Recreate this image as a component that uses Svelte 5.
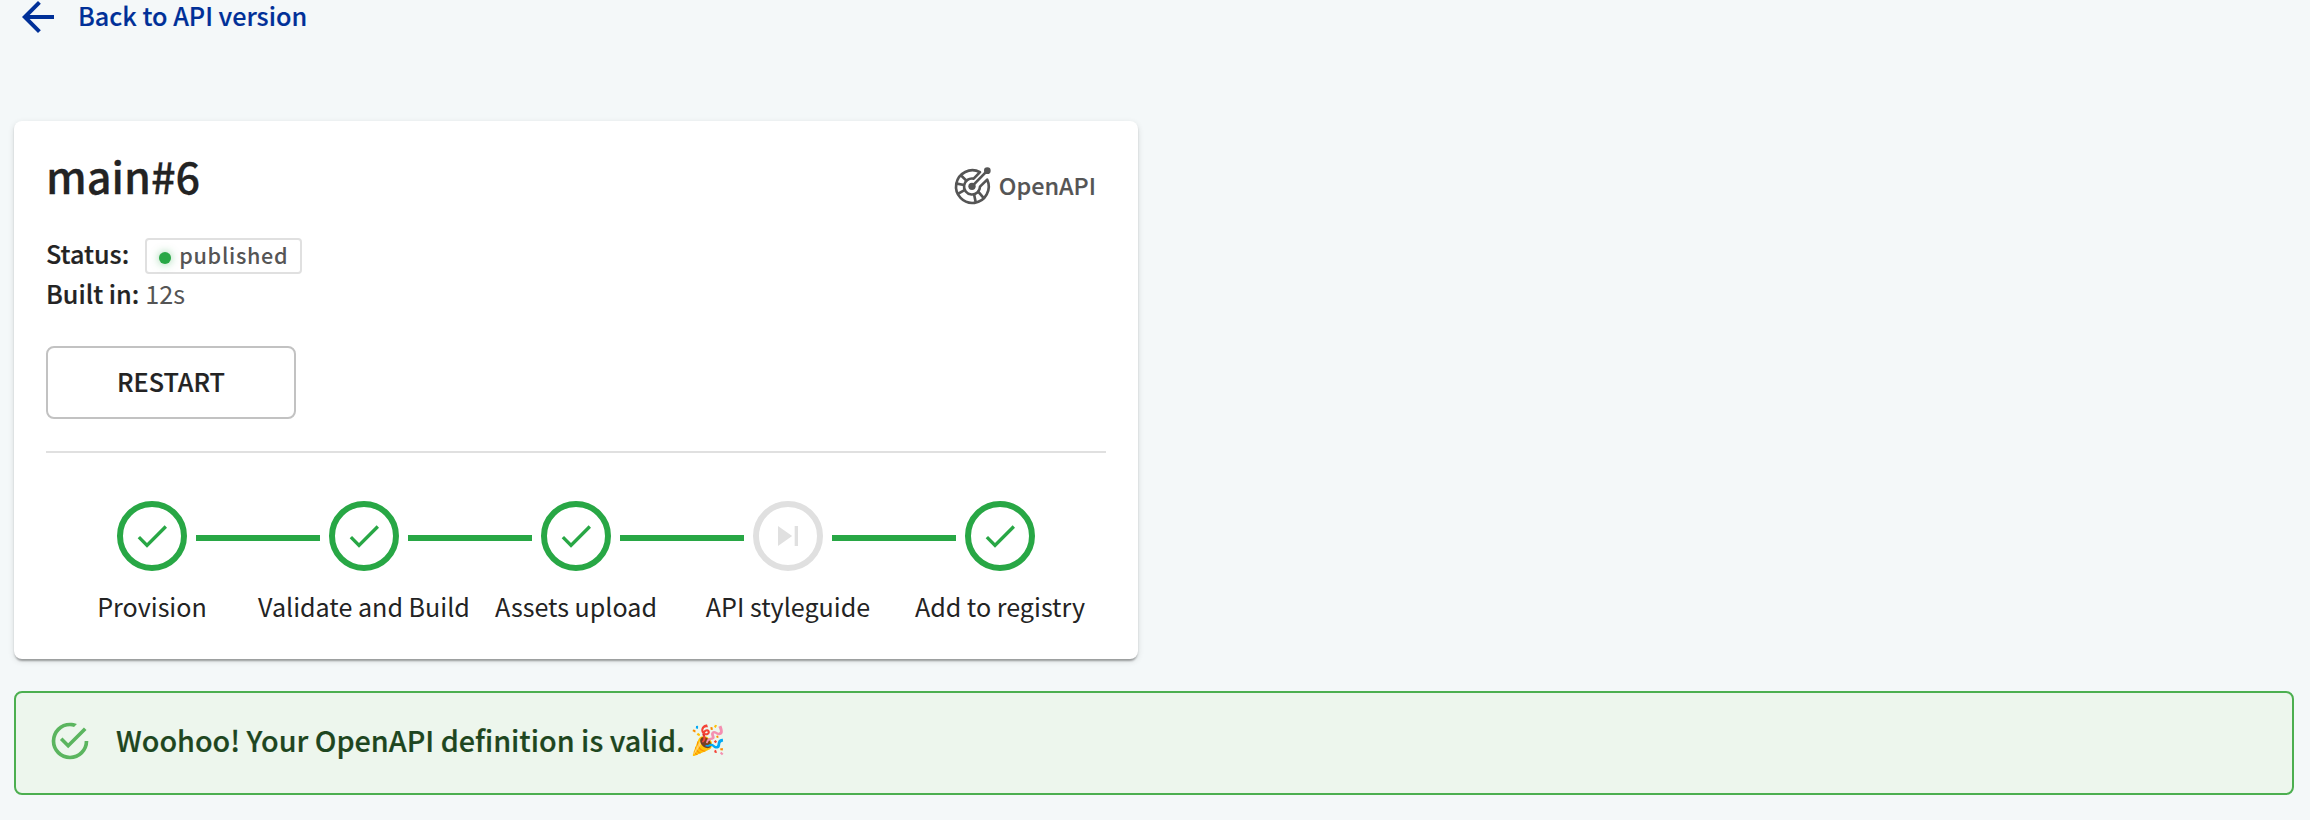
<script>
  const steps = [
    { label: 'Provision', state: 'done' },
    { label: 'Validate and Build', state: 'done' },
    { label: 'Assets upload', state: 'done' },
    { label: 'API styleguide', state: 'skipped' },
    { label: 'Add to registry', state: 'done' },
  ];
</script>

<main class="page">
  <a class="back" href="#versions">
    <svg class="back-icon" viewBox="0 0 24 24">
      <path d="M20 11H7.83l5.59-5.59L12 4l-8 8 8 8 1.41-1.41L7.83 13H20v-2z" />
    </svg>
    <span>Back to API version</span>
  </a>

  <section class="card">
    <header class="card-head">
      <h1>main#6</h1>
      <div class="format">
        <svg class="format-icon" viewBox="0 0 120 120">
          <g fill="none" stroke="currentColor" stroke-width="8" stroke-linejoin="round">
            <path d="M81 18.5A49 49 0 1 0 102.5 41L81 62A24 24 0 1 1 62 38Z" />
            <path d="M23 27L40 44M8 52L33 57M16 83L37 71M68 108L63 84M91 95L75 76" />
            <path d="M57 61L103 14" />
          </g>
          <circle cx="57" cy="61" r="11" fill="currentColor" />
          <circle cx="103" cy="14" r="10" fill="currentColor" />
        </svg>
        <span>OpenAPI</span>
      </div>
    </header>

    <div class="facts">
      <div class="fact">
        <b>Status:</b>
        <span class="badge"><i class="dot"></i><span>published</span></span>
      </div>
      <div class="fact"><b>Built in:</b><span class="value">12s</span></div>
    </div>

    <button class="restart">RESTART</button>

    <ol class="steps">
      {#each steps as step}
        <li class="step">
          <span class="line"></span>
          <span class="ring" class:skipped={step.state === 'skipped'}>
            <svg viewBox="0 0 24 24">
              {#if step.state === 'done'}
                <path d="M9 16.17 4.83 12l-1.42 1.41L9 19 21 7l-1.41-1.41z" />
              {:else}
                <path d="M6 18l8.5-6L6 6v12zM16 6v12h2V6h-2z" />
              {/if}
            </svg>
          </span>
          <span class="line"></span>
          <span class="label">{step.label}</span>
        </li>
      {/each}
    </ol>
  </section>

  <div class="alert">
    <svg class="alert-icon" viewBox="0 0 24 24">
      <path d="M20 12A8 8 0 0 1 12 20A8 8 0 0 1 4 12A8 8 0 0 1 12 4C12.76 4 13.5 4.11 14.2 4.31L15.77 2.74C14.61 2.26 13.34 2 12 2A10 10 0 0 0 2 12A10 10 0 0 0 12 22A10 10 0 0 0 22 12M7.91 10.08L6.5 11.5L11 16L21 6L19.59 4.58L11 13.17L7.91 10.08Z" />
    </svg>
    <p>Woohoo! Your OpenAPI definition is valid. <span class="emoji">🎉</span></p>
  </div>
</main>

<style>
  :global(body) {
    background: #f4f8f9;
  }
  .page {
    box-sizing: border-box;
    height: 820px;
    padding: 0 16px 0 14px;
    overflow: hidden;
    color: #232323;
    font: 400 25.2px/40px 'Noto Sans CJK SC', 'Source Sans Pro', sans-serif;
  }
  svg {
    display: block;
    flex: none;
    fill: currentColor;
  }
  .back {
    display: flex;
    align-items: center;
    width: max-content;
    height: 34px;
    margin-bottom: 87px;
    color: #003098;
    font-weight: 500;
    text-decoration: none;
    -webkit-text-stroke: 0.15px currentColor;
  }
  .back-icon {
    width: 48px;
    height: 48px;
  }
  .back span {
    padding: 0 0 4px 16px;
    line-height: 28px;
  }
  .card {
    box-sizing: border-box;
    width: 1124px;
    height: 538px;
    padding: 32px;
    border-radius: 8px;
    background: #fff;
    box-shadow:
      0 4px 2px -2px rgba(0, 0, 0, 0.2),
      0 2px 2px 0 rgba(0, 0, 0, 0.14),
      0 2px 6px 0 rgba(0, 0, 0, 0.12);
  }
  .card-head {
    display: flex;
    justify-content: space-between;
    height: 80px;
  }
  h1 {
    margin: 0;
    font-size: 43.2px;
    font-weight: 500;
    line-height: 44px;
    -webkit-text-stroke: 0.3px currentColor;
  }
  .format {
    display: flex;
    align-items: center;
    gap: 6px;
    height: 40px;
    margin-top: 12px;
    padding-right: 10px;
    color: #555;
    font-size: 23.4px;
    font-weight: 500;
    -webkit-text-stroke: 0.15px currentColor;
  }
  .format-icon {
    width: 40px;
    height: 40px;
    margin-top: 1px;
  }
  .fact {
    display: flex;
    height: 40px;
  }
  .fact b {
    font-weight: 500;
    -webkit-text-stroke: 0.2px currentColor;
  }
  .value {
    margin-left: 6px;
    color: #555;
  }
  .badge {
    display: flex;
    align-items: center;
    box-sizing: border-box;
    width: 157px;
    height: 36px;
    margin: 5px 0 0 16px;
    padding-left: 12px;
    border: 2px solid #e0e0e0;
    border-radius: 4px;
    color: #555;
    font-size: 21.6px;
    font-weight: 500;
    letter-spacing: 0.7px;
    line-height: 30px;
  }
  .badge span {
    padding-bottom: 2px;
  }
  .dot {
    width: 12px;
    height: 12px;
    margin: 4px 8px 0 0;
    border-radius: 50%;
    background: #28a745;
    box-shadow: 0 0 8px rgba(40, 167, 69, 0.5);
  }
  .restart {
    display: block;
    box-sizing: border-box;
    width: 250px;
    height: 73px;
    margin: 33px 0 32px;
    padding: 0 0 3px 0;
    border: 2px solid #c2c2c2;
    border-radius: 8px;
    background: #fff;
    color: #232323;
    font: inherit;
    font-weight: 500;
    -webkit-text-stroke: 0.2px currentColor;
  }
  .steps {
    display: grid;
    grid-template-columns: repeat(5, 212px);
    height: 176px;
    margin: 0;
    padding: 48px 0 0;
    border-top: 2px solid #e0e0e0;
    list-style: none;
  }
  .step {
    display: grid;
    grid-template-columns: 1fr 70px 1fr;
    grid-template-rows: 70px 40px;
    column-gap: 9px;
    row-gap: 15px;
    align-items: center;
  }
  .line {
    height: 6px;
    margin-top: 4px;
    background: #28a745;
  }
  .step:first-child .line:first-child,
  .step:last-child .ring + .line {
    visibility: hidden;
  }
  .ring {
    display: grid;
    place-items: center;
    box-sizing: border-box;
    width: 70px;
    height: 70px;
    border: 6px solid currentColor;
    border-radius: 50%;
    color: #28a745;
  }
  .ring.skipped {
    color: #e0e0e0;
  }
  .ring svg {
    width: 40px;
    height: 40px;
  }
  .label {
    grid-column: 1 / -1;
    font-size: 25.1px;
    text-align: center;
    white-space: nowrap;
  }
  .alert {
    display: flex;
    align-items: center;
    box-sizing: border-box;
    height: 104px;
    margin-top: 32px;
    padding: 0 32px;
    border: 2px solid #4caf50;
    border-radius: 8px;
    background: #edf6ed;
    color: #1e4620;
  }
  .alert-icon {
    width: 44px;
    height: 44px;
    margin: -5px 24px 0 0;
    color: #4caf50;
    opacity: 0.9;
  }
  .alert p {
    margin: 0;
    padding-bottom: 7px;
    font-size: 28.75px;
    font-weight: 500;
    -webkit-text-stroke: 0.2px currentColor;
  }
  .emoji {
    position: relative;
    top: -2px;
    left: -1px;
    font-size: 28.75px;
    line-height: 1;
    -webkit-text-stroke: 0;
  }
</style>
